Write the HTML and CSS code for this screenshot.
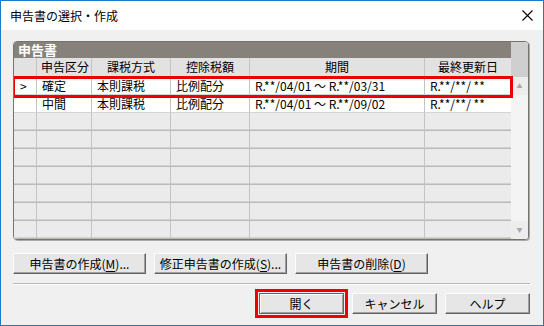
FILE: index.html
```html
<!DOCTYPE html>
<html lang="ja">
<head>
  <meta charset="UTF-8">
  <title>申告書の選択・作成</title>
  <link rel="stylesheet" href="styles.css">
</head>
<body>
  <div class="window">
    <div class="titlebar">
      <span class="title">申告書の選択・作成</span>
      <svg class="close" width="11" height="11" viewBox="0 0 11 11">
        <path d="M0.5 0.5 L10.5 10.5 M10.5 0.5 L0.5 10.5" stroke="#000" stroke-width="1.1" fill="none"/>
      </svg>
    </div>

    <div class="content">
      <div class="panel">
        <div class="panel-main">
          <div class="panel-head">申告書</div>
          <table class="grid">
            <colgroup>
              <col style="width:23px">
              <col style="width:55px">
              <col style="width:79px">
              <col style="width:79px">
              <col style="width:175px">
              <col style="width:86px">
            </colgroup>
            <thead>
              <tr>
                <th></th>
                <th>申告区分</th>
                <th>課税方式</th>
                <th>控除税額</th>
                <th>期間</th>
                <th>最終更新日</th>
              </tr>
            </thead>
            <tbody>
              <tr class="data">
                <td class="mark">&gt;</td>
                <td>確定</td>
                <td>本則課税</td>
                <td>比例配分</td>
                <td>R.**/04/01 ～ R.**/03/31</td>
                <td>R.**/**/ **</td>
              </tr>
              <tr class="data">
                <td class="mark"></td>
                <td>中間</td>
                <td>本則課税</td>
                <td>比例配分</td>
                <td>R.**/04/01 ～ R.**/09/02</td>
                <td>R.**/**/ **</td>
              </tr>
              <tr class="empty"><td></td><td></td><td></td><td></td><td></td><td></td></tr>
              <tr class="empty"><td></td><td></td><td></td><td></td><td></td><td></td></tr>
              <tr class="empty"><td></td><td></td><td></td><td></td><td></td><td></td></tr>
              <tr class="empty"><td></td><td></td><td></td><td></td><td></td><td></td></tr>
              <tr class="empty"><td></td><td></td><td></td><td></td><td></td><td></td></tr>
              <tr class="empty"><td></td><td></td><td></td><td></td><td></td><td></td></tr>
              <tr class="empty"><td></td><td></td><td></td><td></td><td></td><td></td></tr>
            </tbody>
          </table>
        </div>
        <div class="scrollbar">
          <div class="scroll-top"></div>
          <div class="scroll-btn">&#9650;</div>
          <div class="scroll-track"></div>
          <div class="scroll-btn">&#9660;</div>
        </div>
        <div class="row-highlight"></div>
      </div>

      <div class="actions">
        <button class="btn wide">申告書の作成(<u>M</u>)...</button>
        <button class="btn wide">修正申告書の作成(<u>S</u>)...</button>
        <button class="btn wide">申告書の削除(<u>D</u>)</button>
      </div>

      <div class="separator"></div>

      <div class="footer">
        <button class="btn small focus">開く</button>
        <button class="btn small">キャンセル</button>
        <button class="btn small">ヘルプ</button>
      </div>
    </div>
  </div>
</body>
</html>
```

FILE: styles.css
```css
* {
  box-sizing: border-box;
}
body {
  margin: 0;
  font-family: "Noto Sans CJK JP", "Noto Sans", sans-serif;
  font-size: 12px;
  color: #000;
  background: #fff;
}
.window {
  width: 544px;
  height: 326px;
  border: 1px solid #1979ca;
  background: #f0f0f0;
  display: flex;
  flex-direction: column;
}
.titlebar {
  height: 29px;
  background: #fff;
  display: flex;
  align-items: center;
  justify-content: space-between;
  padding: 0 10px 0 9px;
  flex-shrink: 0;
}
.title {
  font-size: 12px;
  line-height: 14px;
}
.close {
  display: block;
}
.content {
  padding: 11px 13px 0 12px;
}

/* panel */
.panel {
  position: relative;
  display: flex;
  width: 516px;
  height: 199px;
  border: 1px solid #77746d;
  border-radius: 4px;
  overflow: hidden;
  box-shadow: 1px 1px 0 #a9a9a9;
  background: #ebebeb;
}
.panel-main {
  width: 497px;
}
.panel-head {
  height: 16px;
  background: #86827b;
  color: #fff;
  font-weight: bold;
  font-size: 13px;
  line-height: 16px;
  padding-left: 4px;
}
.grid {
  border-collapse: separate;
  border-spacing: 0;
  table-layout: fixed;
  width: 497px;
}
.grid th,
.grid td {
  padding: 0 4px;
  border-right: 1px solid #c4c4c4;
  white-space: nowrap;
  overflow: hidden;
  font-weight: normal;
  line-height: 14px;
}
.grid th:last-child,
.grid td:last-child {
  border-right: none;
}
.grid th {
  height: 19px;
  background: #e2e2e2;
  text-align: center;
  border-bottom: 1px solid #a8a8a8;
}
.grid .data td {
  height: 18px;
  background: #fff;
  border-bottom: 1px solid #d4d4d4;
  padding-left: 5px;
}
.grid .data td.mark {
  padding-left: 6px;
}
.grid .empty td {
  height: 18px;
  background: #ebebeb;
  border-bottom: 1px solid #b9b9b9;
  box-shadow: inset 0 -1px 0 #d2d2d2;
}

/* scrollbar */
.scrollbar {
  width: 17px;
  display: flex;
  flex-direction: column;
  background: #f3f3f3;
}
.scroll-top {
  height: 35px;
  background: #cfcfcf;
}
.scroll-btn {
  height: 18px;
  background: #ededed;
  color: #a8a8a8;
  font-size: 6px;
  line-height: 18px;
  text-align: center;
}
.scroll-track {
  flex: 1;
  background: #f4f4f4;
}

.row-highlight {
  position: absolute;
  left: -2px;
  top: 34px;
  width: 501px;
  height: 22px;
  border: 3px solid #ee0000;
  pointer-events: none;
}

/* buttons */
.actions {
  display: flex;
  gap: 8px;
  margin-top: 13px;
}
.btn {
  font-family: inherit;
  font-size: 12px;
  line-height: 14px;
  height: 21px;
  padding: 0;
  color: #000;
  background: #e6e6e6;
  border: 1px solid;
  border-color: #fcfcfc #646464 #646464 #fcfcfc;
  box-shadow: inset -1px -1px 0 #a0a0a0;
}
.btn u {
  text-underline-offset: 2px;
}
.wide {
  width: 133px;
}
.separator {
  width: 517px;
  height: 2px;
  margin-top: 9px;
  border-top: 1px solid #b4b4b4;
  border-bottom: 1px solid #fff;
}
.footer {
  display: flex;
  justify-content: flex-end;
  gap: 8px;
  margin-top: 8px;
  width: 517px;
}
.small {
  width: 85px;
}
.focus {
  outline: 3px solid #ee0000;
  outline-offset: 1px;
  border-color: #646464;
  box-shadow: inset 1px 1px 0 #fcfcfc, inset -1px -1px 0 #a0a0a0;
}
```
